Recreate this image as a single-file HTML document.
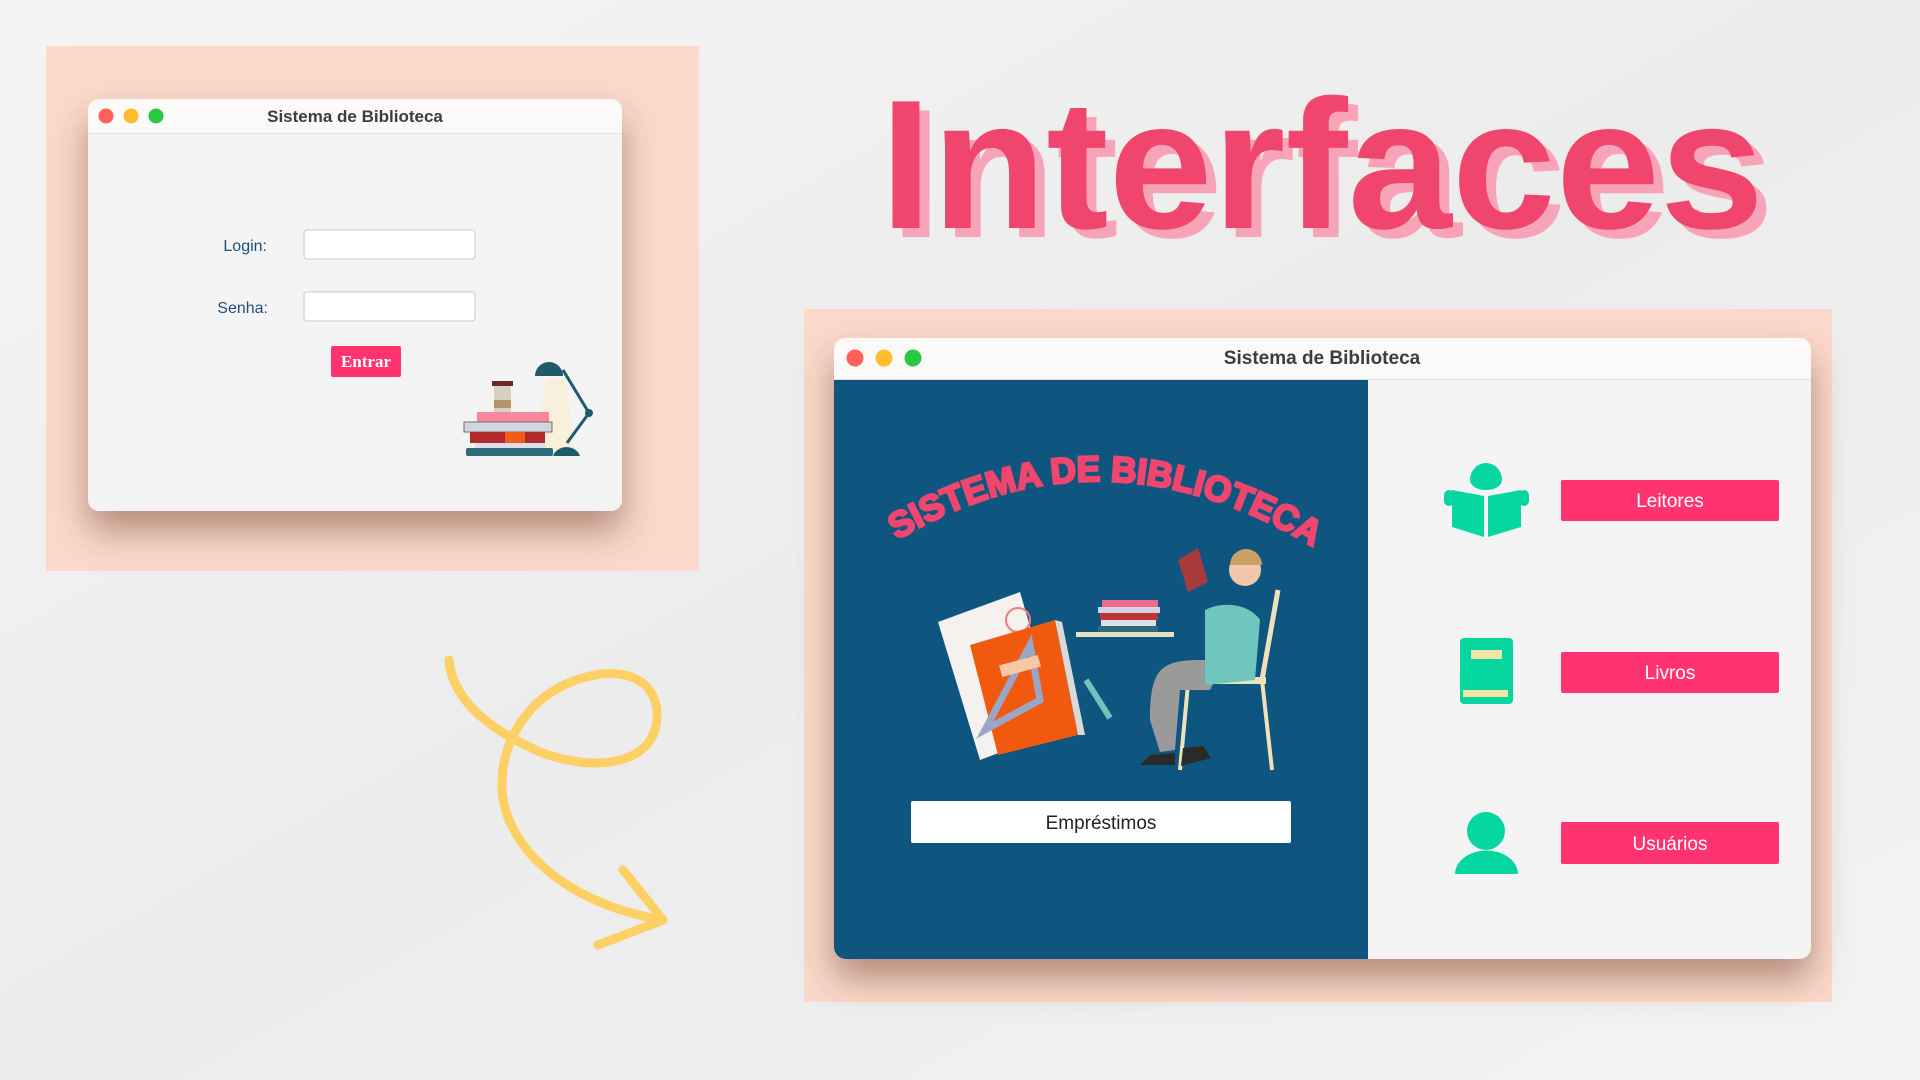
<!DOCTYPE html>
<html><head><meta charset="utf-8"><style>
html,body{margin:0;padding:0;width:1920px;height:1080px;overflow:hidden;background:#f1f1f1}
svg{display:block}
text{font-family:"Liberation Sans",sans-serif}
</style></head><body>
<svg width="1920" height="1080" viewBox="0 0 1920 1080" xmlns="http://www.w3.org/2000/svg">
<defs>
<filter id="sh" x="-20%" y="-20%" width="140%" height="150%"><feDropShadow dx="0" dy="20" stdDeviation="18" flood-color="#6a3a2a" flood-opacity="0.5"/></filter>
<linearGradient id="bg" x1="0" y1="0" x2="1" y2="1"><stop offset="0" stop-color="#f4f4f4"/><stop offset="0.5" stop-color="#ececec"/><stop offset="1" stop-color="#f3f3f3"/></linearGradient>
</defs>
<rect width="1920" height="1080" fill="url(#bg)"/>

<rect x="46" y="46" width="653" height="525" fill="#fbdacb"/>
<g filter="url(#sh)">
<rect x="88" y="99" width="534" height="412" rx="11" fill="#f4f4f4"/>
</g>
<path d="M88 133 V110 a11 11 0 0 1 11 -11 H611 a11 11 0 0 1 11 11 V133 Z" fill="#fbfaf9"/>
<line x1="88" y1="133.5" x2="622" y2="133.5" stroke="#e2e2e2"/>
<circle cx="106" cy="116" r="7.5" fill="#fe5f57"/>
<circle cx="131" cy="116" r="7.5" fill="#febc2e"/>
<circle cx="156" cy="116" r="7.5" fill="#28c840"/>
<text x="355" y="122" font-size="17" font-weight="bold" fill="#3d3d3d" text-anchor="middle">Sistema de Biblioteca</text>
<text x="267" y="251" font-size="16" fill="#1f4e79" text-anchor="end">Login:</text>
<text x="268" y="313" font-size="16" fill="#1f4e79" text-anchor="end">Senha:</text>
<rect x="304" y="230" width="171" height="29" rx="3" fill="#fff" stroke="#c8c8c8"/>
<rect x="304" y="292" width="171" height="29" rx="3" fill="#fff" stroke="#c8c8c8"/>
<rect x="331" y="346" width="70" height="31" rx="2" fill="#ff3370"/>
<text x="366" y="367" font-size="17" font-weight="bold" fill="#fff" text-anchor="middle" style="font-family:'Liberation Serif',serif">Entrar</text>
<polygon points="547,378 566,378 575,455 530,455" fill="#f8f0d8" opacity="0.9"/>
<rect x="494" y="385" width="17" height="28" fill="#d9d0c4"/><rect x="492" y="381" width="21" height="5" fill="#6a2a24"/><rect x="494" y="400" width="17" height="8" fill="#b8946a"/>
<rect x="477" y="412" width="72" height="10" fill="#f6899d"/>
<rect x="464" y="422" width="88" height="10" fill="#cfd6e4" stroke="#8a6a4a" stroke-width="1"/>
<rect x="470" y="432" width="75" height="11" fill="#b02a2a"/><rect x="505" y="432" width="20" height="11" fill="#f15a1a"/>
<rect x="475" y="443" width="70" height="5" fill="#dcdfe8"/>
<rect x="466" y="448" width="87" height="8" rx="2" fill="#2c6b7a"/>
<path d="M535 376 a14 14 0 0 1 28 0 Z" fill="#1f5a6a"/>
<line x1="563" y1="370" x2="589" y2="413" stroke="#1f5a6a" stroke-width="3"/>
<line x1="589" y1="413" x2="567" y2="443" stroke="#1f5a6a" stroke-width="3"/>
<circle cx="589" cy="413" r="4" fill="#1f5a6a"/>
<path d="M553 456 a14 12 0 0 1 27 0 Z" fill="#1f5a6a"/>

<text x="885" y="232" font-size="184" font-weight="bold" fill="#f8a4b8" textLength="884" lengthAdjust="spacingAndGlyphs" transform="translate(5,5)">Interfaces</text>
<text x="880" y="228" font-size="184" font-weight="bold" fill="#f0466e" textLength="884" lengthAdjust="spacingAndGlyphs">Interfaces</text>

<g fill="none" stroke="#fdd065" stroke-width="9" stroke-linecap="round" stroke-linejoin="round">
<path d="M449 660 C452 700 490 730 540 752 C600 775 660 762 657 712 C655 680 625 668 590 676 C530 690 500 740 502 790 C506 850 570 905 663 920"/>
<path d="M623 870 L663 920 L598 945"/>
</g>

<rect x="804" y="309" width="1028" height="693" fill="#fbdacb"/>
<g filter="url(#sh)">
<rect x="834" y="338" width="977" height="621" rx="12" fill="#f4f4f4"/>
</g>
<path d="M834 379 V350 a12 12 0 0 1 12 -12 H1799 a12 12 0 0 1 12 12 V379 Z" fill="#fbfaf9"/>
<line x1="834" y1="379.5" x2="1811" y2="379.5" stroke="#e0e0e0"/>
<circle cx="855" cy="358" r="8.5" fill="#fe5f57"/>
<circle cx="884" cy="358" r="8.5" fill="#febc2e"/>
<circle cx="913" cy="358" r="8.5" fill="#28c840"/>
<text x="1322" y="364" font-size="19" font-weight="bold" fill="#3d3d3d" text-anchor="middle">Sistema de Biblioteca</text>
<path d="M834 380 H1368 V959 H846 a12 12 0 0 1 -12 -12 Z" fill="#0e5580"/>

<path id="arc" d="M897 540 Q1100 420 1310 545" fill="none"/>
<text font-size="36" font-weight="bold" fill="#f0466e" stroke="#f0466e" stroke-width="2.5" textLength="440" lengthAdjust="spacingAndGlyphs"><textPath href="#arc">SISTEMA DE BIBLIOTECA</textPath></text>

<polygon points="938,622 1020,592 1060,730 980,760" fill="#f4f1ee"/>
<circle cx="1018" cy="620" r="12" fill="none" stroke="#f27a7a" stroke-width="2"/>
<polygon points="970,645 1055,620 1078,735 998,755" fill="#f15a0e"/>
<polygon points="1055,620 1062,622 1085,735 1078,735" fill="#d9d9d9"/>
<polygon points="1030,645 1040,700 985,730" fill="none" stroke="#9aa6c8" stroke-width="7"/>
<rect x="1000" y="660" width="40" height="12" fill="#f6c8a8" transform="rotate(-15 1020 666)"/>
<line x1="1086" y1="680" x2="1110" y2="718" stroke="#6ec4b8" stroke-width="6"/>
<rect x="1076" y="632" width="98" height="5" fill="#e7e1c4"/>
<rect x="1102" y="600" width="56" height="7" fill="#ee6a8a"/>
<rect x="1098" y="607" width="62" height="6" fill="#d0d6e6"/>
<rect x="1100" y="613" width="58" height="7" fill="#c03434"/>
<rect x="1101" y="620" width="55" height="6" fill="#dcdfe8"/>
<rect x="1098" y="626" width="60" height="6" fill="#2c6b7a"/>
<line x1="1278" y1="590" x2="1262" y2="680" stroke="#ede2b8" stroke-width="5"/>
<line x1="1262" y1="680" x2="1272" y2="770" stroke="#ede2b8" stroke-width="4"/>
<rect x="1180" y="677" width="86" height="7" fill="#ede2b8"/>
<line x1="1188" y1="684" x2="1180" y2="770" stroke="#ede2b8" stroke-width="4"/>
<path d="M1150 720 C1150 670 1160 660 1200 660 L1225 660 L1210 690 L1180 690 L1175 750 L1160 752 Z" fill="#9a9a9a"/>
<path d="M1205 610 C1225 600 1250 605 1260 620 L1255 680 L1205 685 Z" fill="#6ec6bc"/>
<circle cx="1245" cy="570" r="16" fill="#f3c8a8"/>
<path d="M1230 565 a16 16 0 0 1 32 0 Z" fill="#c9a066"/>
<polygon points="1178,560 1198,548 1208,582 1188,592" fill="#a83a3a"/>
<path d="M1150 755 l25 -2 0 12 -35 0 Z" fill="#2a2a2a"/>
<path d="M1183 748 l20 -2 8 12 -30 8 Z" fill="#2a2a2a"/>

<rect x="911" y="801" width="380" height="42" rx="2" fill="#fff"/>
<text x="1101" y="829" font-size="19" fill="#222" text-anchor="middle">Empréstimos</text>

<rect x="1561" y="480" width="218" height="41" rx="2" fill="#ff3370"/>
<text x="1670" y="507" font-size="19" fill="#fff" text-anchor="middle">Leitores</text>
<rect x="1561" y="652" width="218" height="41" rx="2" fill="#ff3370"/>
<text x="1670" y="679" font-size="19" fill="#fff" text-anchor="middle">Livros</text>
<rect x="1561" y="822" width="218" height="42" rx="2" fill="#ff3370"/>
<text x="1670" y="850" font-size="19" fill="#fff" text-anchor="middle">Usuários</text>

<g fill="#06d6a0">
<path d="M1470 480 a16 17 0 0 1 32 0 a16 10 0 0 1 -32 0 Z"/>
<path d="M1452 490 L1484 496 L1484 537 L1452 527 Z"/>
<path d="M1488 496 L1521 490 L1521 527 L1488 537 Z"/>
<rect x="1444" y="490" width="10" height="16" rx="5"/>
<rect x="1519" y="490" width="10" height="16" rx="5"/>
<rect x="1460" y="638" width="53" height="66" rx="4"/>
<circle cx="1486" cy="831" r="19"/>
<path d="M1455 874 a31 23 0 0 1 63 0 Z"/>
</g>
<rect x="1471" y="650" width="31" height="9" fill="#f4e4a6"/>
<rect x="1463" y="690" width="45" height="7" fill="#f4e4a6"/>
</svg>
</body></html>
